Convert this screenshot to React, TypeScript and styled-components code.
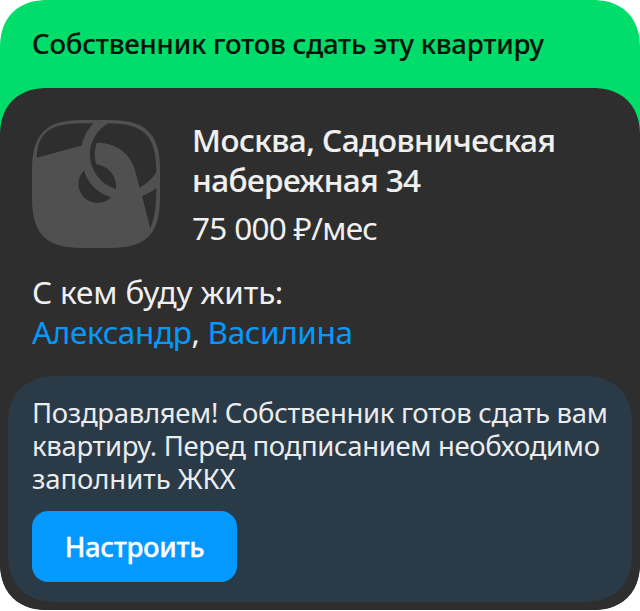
import React from "react";
import styled, { createGlobalStyle } from "styled-components";

const GlobalStyle = createGlobalStyle`
  body {
    margin: 0;
    background: #ffffff;
    font-family: "Noto Sans", "Open Sans", sans-serif;
  }
`;

const Card = styled.article`
  width: 640px;
  height: 610px;
  display: flex;
  flex-direction: column;
  overflow: hidden;
  border-radius: 48px;
  corner-shape: superellipse(1.2);
  background: linear-gradient(#00dd6a 300px, #2e2e2e 300px);
`;

const Header = styled.header`
  box-sizing: border-box;
  height: 88px;
  flex: none;
  padding: 0 32px;
`;

const Content = styled.section`
  box-sizing: border-box;
  flex: 1;
  display: flex;
  flex-direction: column;
  padding: 32px 8px 8px;
  border-radius: 48px 48px 0 0;
  corner-shape: superellipse(1.2);
  background: #2e2e2e;
`;

const Summary = styled.div`
  display: flex;
  gap: 32px;
  padding: 0 24px;
`;

const Cover = styled.svg`
  display: block;
  flex: none;
  width: 128px;
  height: 128px;
`;

const Details = styled.div`
  display: flex;
  flex-direction: column;
`;

const Line = styled.span<{ $tracking: number }>`
  display: block;
  white-space: nowrap;
  letter-spacing: ${(p) => p.$tracking}px;
`;

const Title = styled.h1`
  margin: 0;
  color: #001409;
  font-size: 27.5px;
  font-weight: 500;
  line-height: 88px;
  -webkit-text-stroke: 0.15px currentColor;
`;

const Address = styled.h2`
  margin: 0;
  color: #f0f0f0;
  font-size: 31.5px;
  font-weight: 500;
  line-height: 40px;
  -webkit-text-stroke: 0.15px currentColor;
`;

const Price = styled.div`
  margin-top: 8px;
  color: #f0f0f0;
  font-size: 31.5px;
  line-height: 40px;
`;

const Roommates = styled.div`
  margin-top: 24px;
  padding: 0 24px;
  color: #f0f0f0;
  font-size: 31.5px;
  line-height: 40px;
`;

const PersonLink = styled.a`
  color: #0499ff;
  text-decoration: none;
`;

const Notice = styled.div`
  box-sizing: border-box;
  height: 226px;
  margin-top: 24px;
  padding: 20px 24px;
  border-radius: 48px;
  corner-shape: superellipse(1.2);
  background: #2a3a46;
`;

const NoticeText = styled.p`
  margin: 0;
  color: #eaecee;
  font-size: 27.5px;
  line-height: 33px;
`;

const Action = styled.button`
  display: block;
  width: 205px;
  height: 71px;
  margin: 16px 0 0;
  padding: 0;
  border: 0;
  border-radius: 16px;
  background: #0499ff;
  color: #ffffff;
  font-family: inherit;
  font-size: 27.5px;
  font-weight: 500;
  -webkit-text-stroke: 0.3px currentColor;
`;

export default function App() {
  return (
    <>
      <GlobalStyle />
      <Card>
        <Header>
          <Title>
            <Line $tracking={-0.19}>Собственник готов сдать эту квартиру</Line>
          </Title>
        </Header>
        <Content>
          <Summary>
            <Cover viewBox="0 0 128 128" aria-hidden="true">
              <path
                fill="#505050"
                d="M0 50C0 14 14 0 50 0h28c36 0 50 14 50 50v28c0 36-14 50-50 50H50C14 128 0 114 0 78Z"
              />
              <g fill="#2e2e2e">
                <path d="M4.7 37.7L49.7 25.5C51.5 17 56 9 61.3 3.3H52C18 3.3 6 12 4.7 37.7Z" />
                <path d="M76 3.3C65 10 58 21 58 34C58 50 68 64 84 69C85.5 56 76 45.5 64.5 44.5C62.2 38 62 30 65 22.8C85 23 98 34 103 50L107.5 67.5C114 64 120 59.5 124.4 52C124.4 17 113 3.3 76 3.3Z" />
                <path d="M52 50.5A18.95 18.95 0 1 0 79 77.3C66 73.5 55.5 63 52 50.5Z" />
                <path d="M110 76C115.5 74 119.5 71.5 124.3 68C124.3 83 123.5 96 118.3 108.5Z" />
              </g>
            </Cover>
            <Details>
              <Address>
                <Line $tracking={-0.5}>Москва, Садовническая</Line>
                <Line $tracking={-0.57}>набережная 34</Line>
              </Address>
              <Price>
                <Line $tracking={-0.7}>75 000 ₽/мес</Line>
              </Price>
            </Details>
          </Summary>
          <Roommates>
            <Line $tracking={-0.13}>С кем буду жить:</Line>
            <Line $tracking={-0.35}>
              <PersonLink>Александр</PersonLink>, <PersonLink>Василина</PersonLink>
            </Line>
          </Roommates>
          <Notice>
            <NoticeText>
              <Line $tracking={-0.32}>Поздравляем! Собственник готов сдать вам</Line>
              <Line $tracking={-0.33}>квартиру. Перед подписанием необходимо</Line>
              <Line $tracking={-0.1}>заполнить ЖКХ</Line>
            </NoticeText>
            <Action>
              <Line $tracking={-0.35}>Настроить</Line>
            </Action>
          </Notice>
        </Content>
      </Card>
    </>
  );
}
